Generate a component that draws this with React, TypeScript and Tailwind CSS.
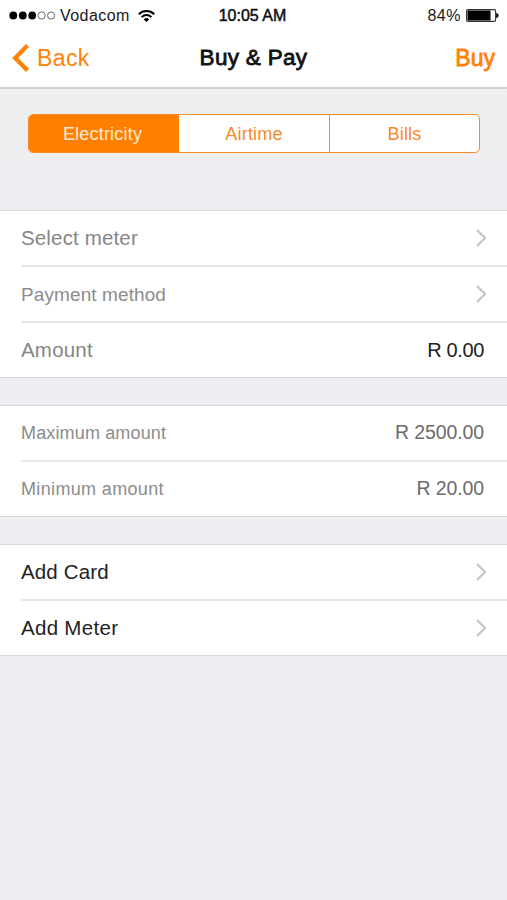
import { useState } from "react";
import type { ReactNode } from "react";

type RowProps = {
  label: string;
  labelClass: string;
  value?: string;
  valueClass?: string;
  last?: boolean;
};

const tabs = [
  { label: "Electricity", className: "w-[150px] pr-[3px]" },
  { label: "Airtime", className: "w-[151px] border-r" },
  { label: "Bills", className: "w-[149px]" },
];

function Chevron() {
  return (
    <svg className="mr-1 h-[18px] w-[11px]" viewBox="0 0 11 18" fill="none" stroke="#c4c4c6" strokeWidth={2.2}>
      <path d="M1 1l8 8-8 8" />
    </svg>
  );
}

function Row({ label, labelClass, value, valueClass = "", last = false }: RowProps) {
  return (
    <div
      className={`ml-[21px] flex items-center justify-between pr-4 ${
        last ? "h-[54px]" : "h-14 border-b-2 border-[#e6e6e8]"
      }`}
    >
      <span className={labelClass}>{label}</span>
      {value ? <span className={`mr-[7px] ${valueClass}`}>{value}</span> : <Chevron />}
    </div>
  );
}

function Group({ children }: { children: ReactNode }) {
  return <section className="border-y border-[#d8d8dc] bg-white">{children}</section>;
}

function StatusBar() {
  return (
    <div className="grid h-[31px] grid-cols-3 items-center pr-2 pl-[9px] text-[16px] leading-none text-[#1a1a1a]">
      <div className="flex items-center">
        <svg className="h-[9px] w-[47px]" viewBox="0 0 47 9" fill="#000">
          <circle cx="4.3" cy="4.5" r="3.9" />
          <circle cx="13.8" cy="4.5" r="3.9" />
          <circle cx="23.2" cy="4.5" r="3.9" />
          <g fill="none" stroke="#555" strokeWidth="0.9">
            <circle cx="32.6" cy="4.5" r="3.6" />
            <circle cx="42.1" cy="4.5" r="3.6" />
          </g>
        </svg>
        <span className="ml-1 tracking-[0.45px]">Vodacom</span>
        <svg className="ml-2 h-[12px] w-[17px]" viewBox="0 0 17 12" fill="none" stroke="#000" strokeWidth="2">
          <path d="M0.8 4.2a10.9 10.9 0 0 1 15.4 0" />
          <path d="M3.6 7.1a6.9 6.9 0 0 1 9.8 0" />
          <path d="M8.5 12 5.8 9.4a3.8 3.8 0 0 1 5.4 0z" fill="#000" stroke="none" />
        </svg>
      </div>
      <span className="pr-[3px] text-center text-[#111] [-webkit-text-stroke:0.5px]">10:05 AM</span>
      <div className="flex items-center justify-end">
        <span className="tracking-[0.5px]">84%</span>
        <svg className="ml-[5px] h-[13px] w-[33px]" viewBox="0 0 33 13">
          <rect x="0.6" y="0.6" width="29" height="11.8" rx="1.3" fill="#fff" stroke="#333" strokeWidth="1.1" />
          <rect x="1.5" y="1.5" width="23" height="10" fill="#000" />
          <path d="M30.2 4c3.2.4 3.2 4.6 0 5z" fill="#000" />
        </svg>
      </div>
    </div>
  );
}

export default function App() {
  const [activeTab, setActiveTab] = useState("Electricity");

  return (
    <main className="h-[900px] w-[507px] overflow-hidden bg-[#eeeef3] font-['Liberation_Sans',Arial,sans-serif] leading-none">
      <header className="h-[89px] border-b-2 border-[#d0d0d1] bg-white">
        <StatusBar />
        <nav className="grid h-[54px] grid-cols-3 items-center pr-3 pl-[12px]">
          <button className="flex items-center text-[23px] tracking-[0.4px] text-[#ff8208]">
            <svg className="mr-[7px] h-[28px] w-[18px]" viewBox="0 0 18 28" fill="none" stroke="#ff8208" strokeWidth={4.3}>
              <path d="M15.5 1.5 3.2 14l12.3 12.5" />
            </svg>
            Back
          </button>
          <h1 className="text-center text-[22.5px] tracking-[0.3px] whitespace-nowrap text-[#111] [-webkit-text-stroke:0.8px]">
            Buy &amp; Pay
          </h1>
          <button className="text-right text-[23px] text-[#ff8208] [-webkit-text-stroke:0.8px]">Buy</button>
        </nav>
      </header>

      <div className="h-[121px] bg-linear-to-b from-[#efefef] to-[#eeeef3] pt-[25px] pl-7">
        <div className="flex h-[39px] w-[452px] overflow-hidden rounded-[5px] border border-[#f58a2b] bg-white">
          {tabs.map((tab) => (
            <button
              key={tab.label}
              onClick={() => setActiveTab(tab.label)}
              className={`border-[#f58a2b] text-[18px] tracking-[0.2px] ${tab.className} ${
                activeTab === tab.label ? "bg-[#ff8000] text-[#ffe9cf]" : "text-[#f58a2b]"
              }`}
            >
              {tab.label}
            </button>
          ))}
        </div>
      </div>

      <div className="flex flex-col gap-[27px]">
        <Group>
          <Row label="Select meter" labelClass="text-[20.5px] tracking-[0.15px] text-[#868686]" />
          <Row label="Payment method" labelClass="text-[19px] tracking-[0.1px] text-[#8c8c8c]" />
          <Row
            label="Amount"
            labelClass="text-[20.5px] tracking-[0.2px] text-[#868686]"
            value="R 0.00"
            valueClass="text-[20px] tracking-[-0.35px] text-[#222]"
            last
          />
        </Group>
        <Group>
          <Row
            label="Maximum amount"
            labelClass="text-[18px] tracking-[0.15px] text-[#8c8c8c]"
            value="R 2500.00"
            valueClass="text-[19.5px] tracking-[-0.1px] text-[#6c6c6c]"
          />
          <Row
            label="Minimum amount"
            labelClass="text-[18px] tracking-[0.35px] text-[#8c8c8c]"
            value="R 20.00"
            valueClass="text-[19.5px] tracking-[-0.1px] text-[#6c6c6c]"
            last
          />
        </Group>
        <Group>
          <Row label="Add Card" labelClass="text-[20.5px] tracking-[0.15px] text-[#222]" />
          <Row label="Add Meter" labelClass="text-[20.5px] tracking-[0.3px] text-[#222]" last />
        </Group>
      </div>
    </main>
  );
}
